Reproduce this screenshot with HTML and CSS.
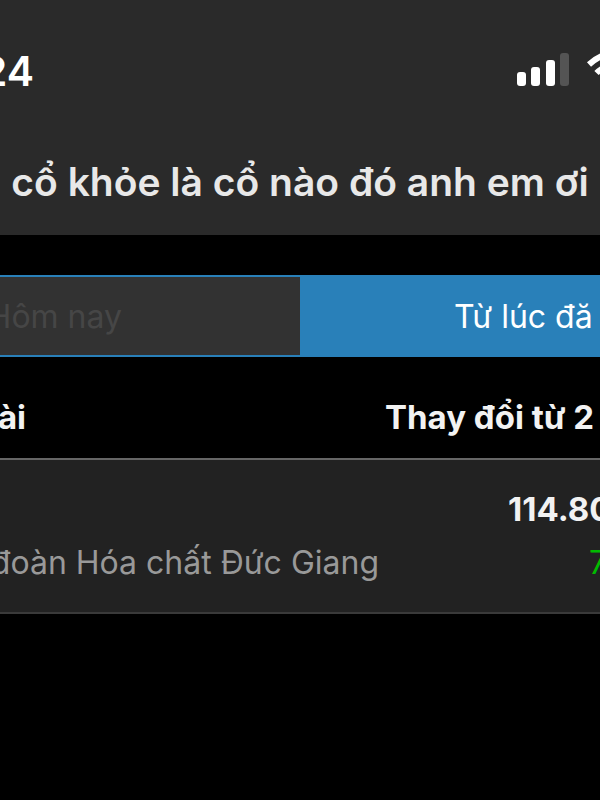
FILE: index.html
```html
<!DOCTYPE html>
<html lang="vi">
<head>
    <meta charset="UTF-8">
    <meta name="viewport" content="width=device-width, initial-scale=1.0">
    <title>cổ khỏe là cổ nào đó anh em ơi</title>

    <link rel="stylesheet" href="styles.css">
</head>
<body>
    <header class="header">
        <div class="status-bar">
            <div class="clock">24</div>
            <svg class="status-icons" width="84" height="40" viewBox="0 0 84 40" aria-hidden="true">
                <rect x="1" y="22" width="9" height="14" rx="3" fill="#fff"/>
                <rect x="15" y="17" width="9" height="19" rx="3" fill="#fff"/>
                <rect x="30" y="10" width="9" height="26" rx="3" fill="#fff"/>
                <rect x="44" y="3" width="9" height="33" rx="3" fill="#545454"/>
                <path d="M73 14.500 Q79 9 86 6" fill="none" stroke="#fff" stroke-width="6"/>
                <path d="M80.500 23 Q84 19.500 89 17" fill="none" stroke="#fff" stroke-width="6"/>
            </svg>
        </div>
        <h1 class="title">cổ khỏe là cổ nào đó anh em ơi</h1>
    </header>

    <main>
        <!-- Period switch -->
        <div class="tabs">
            <button type="button" class="tab">Hôm nay</button>
            <button type="button" class="tab tab-active">Từ lúc đă</button>
        </div>

        <!-- Watch list -->
        <table class="stocks">
            <thead>
                <tr>
                    <th class="col-name" scope="col"><div class="heading-name">ài</div></th>
                    <th scope="col">Thay đổi từ 2</th>
                </tr>
            </thead>
            <tbody>
                <tr>
                    <td class="col-name"><div class="company">đoàn Hóa chất Đức Giang</div></td>
                    <td>
                        <div class="price">114.80</div>
                        <div class="change">7</div>
                    </td>
                </tr>
            </tbody>
        </table>
    </main>
</body>
</html>
```

FILE: styles.css
```css
body {
    margin: 0;
    background-color: #000;
    color: #f2f2f2;
    font-family: Inter, "Noto Sans", sans-serif;
    font-size: 32px;
    line-height: 53px;
    overflow: hidden; /* Long rows run off the screen */
}

.header {
    background-color: #2a2a2a;
    padding: 51px 0 27px;
}

.status-bar {
    display: flex;
    justify-content: space-between;
    height: 40px;
    line-height: 40px;
}

.status-icons {
    margin-top: -1px;
}

/* These texts are cut off by the left edge of the screen */
.clock,
.heading-name,
.company {
    display: flex;
    justify-content: flex-end;
    white-space: nowrap;
}

.clock {
    width: 34px;
    color: #fff;
    font-size: 41px;
    font-weight: 600;
}

.title {
    margin: 64px 0 0;
    color: #e8e8e8;
    font-size: 39px;
    font-weight: 600;
    line-height: 53px;
    text-align: center;
    white-space: nowrap;
}

.tabs {
    display: grid;
    grid-template-columns: 1fr 1fr;
    margin-top: 40px;
    border-top: 2px solid #2980b9;
    border-bottom: 2px solid #2980b9;
}

.tab {
    display: flex;
    align-items: center;
    justify-content: flex-end;
    height: 78px;
    padding: 0 178px 0 0;
    border: 0;
    background-color: #323232;
    color: #464646;
    font: inherit;
    white-space: nowrap;
    overflow: hidden;
}

.tab-active {
    justify-content: flex-start;
    padding: 0 0 0 154px;
    background-color: #2980b9;
    color: #fff;
}

.stocks {
    width: 100%;
    border-collapse: collapse;
    table-layout: fixed;
}

.stocks th,
.stocks td {
    padding: 0;
    text-align: left;
    white-space: nowrap;
}

.stocks th {
    height: 102px;
    padding-top: 20px;
    box-sizing: border-box;
    border-bottom: 2px solid #666;
    font-size: 33px;
    font-weight: 700;
}

.stocks td {
    padding: 23px 0;
    border-bottom: 2px solid #3a3a3a;
    background-color: #222;
}

.stocks .col-name {
    width: 385px;
}

.stocks td.col-name {
    vertical-align: bottom;
}

.heading-name {
    width: 26px;
}

.company {
    width: 379px;
    color: #999;
}

.price {
    padding-left: 123px;
    font-size: 33px;
    font-weight: 700;
}

.change {
    padding-left: 204px;
    color: #0b0;
}
```
